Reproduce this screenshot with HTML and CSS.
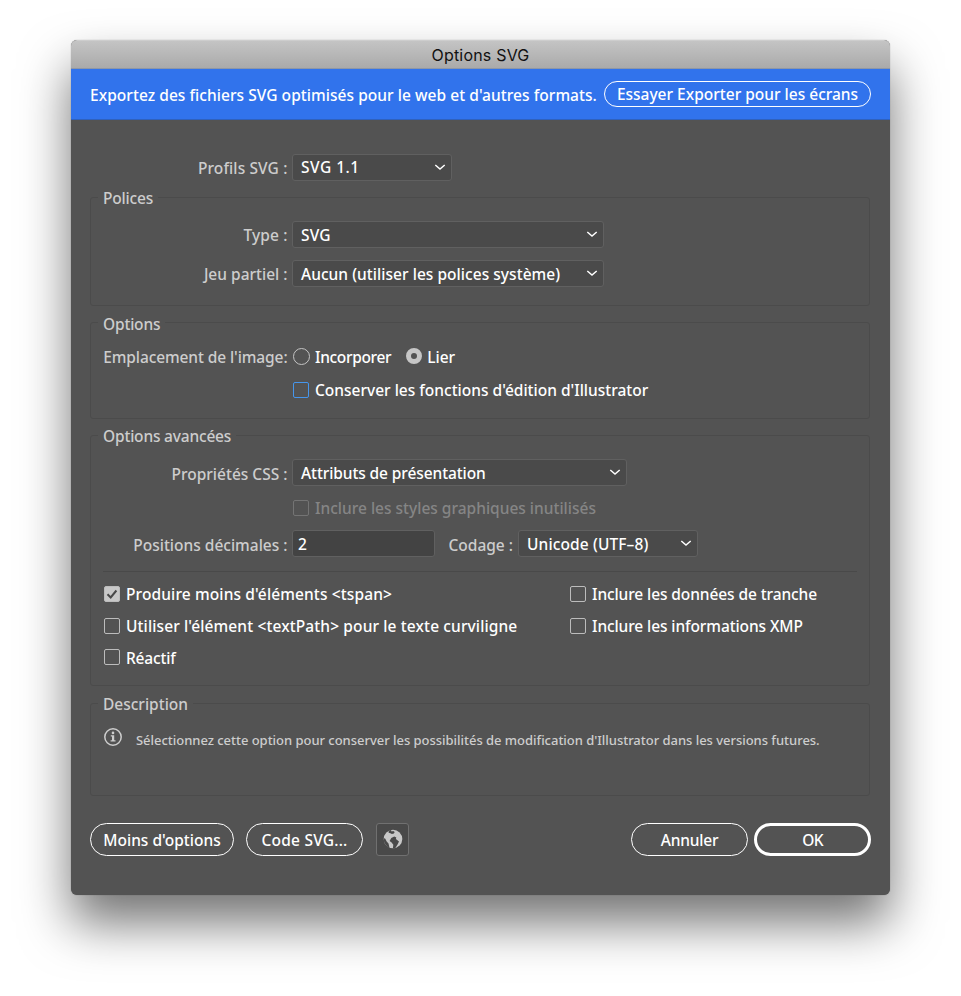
FILE: index.html
```
<!DOCTYPE html>
<html lang="fr">
<head>
<meta charset="utf-8">
<title>Options SVG</title>
<link rel="stylesheet" href="styles.css">
</head>
<body>
<svg class="defs" aria-hidden="true">
  <symbol id="chevron" viewBox="0 0 12 8"><path d="M1.300 2 6 6l4.700-4" fill="none" stroke="currentColor" stroke-width="1.500"/></symbol>
</svg>
<main class="window">
  <header class="titlebar">Options SVG</header>
  <div class="banner">
    <span class="banner-text">Exportez des fichiers SVG optimisés pour le web et d'autres formats.</span>
    <button class="pill pill-banner">Essayer Exporter pour les écrans</button>
  </div>
  <div class="content">
    <div class="row row-profile">
      <span class="label wide-1">Profils SVG :</span>
      <div class="select w-159"><span class="wide-3">SVG 1.1</span><svg class="chevron"><use href="#chevron"/></svg></div>
    </div>

    <section class="group group-fonts">
      <h2 class="legend tight-2">Polices</h2>
      <div class="row row-first">
        <span class="label wide-1">Type :</span>
        <div class="select low w-312"><span class="wide-1">SVG</span><svg class="chevron"><use href="#chevron"/></svg></div>
      </div>
      <div class="row row-next">
        <span class="label">Jeu partiel :</span>
        <div class="select low w-312"><span class="wide-0">Aucun (utiliser les polices système)</span><svg class="chevron"><use href="#chevron"/></svg></div>
      </div>
    </section>

    <section class="group group-options">
      <h2 class="legend legend-low tight-2">Options</h2>
      <div class="row row-first">
        <span class="label tight-1">Emplacement de l'image:</span>
        <div class="radios">
          <span class="choice"><i class="radio"></i><span class="tight-3">Incorporer</span></span>
          <span class="choice"><i class="radio radio-on"></i><span>Lier</span></span>
        </div>
      </div>
      <div class="choice choice-focus"><i class="box box-focus"></i><span>Conserver les fonctions d'édition d'Illustrator</span></div>
    </section>

    <section class="group group-advanced">
      <h2 class="legend tight-2">Options avancées</h2>
      <div class="row row-first">
        <span class="label label-low">Propriétés CSS :</span>
        <div class="select low w-335"><span class="tight-1">Attributs de présentation</span><svg class="chevron"><use href="#chevron"/></svg></div>
      </div>
      <div class="choice choice-disabled"><i class="box box-disabled"></i><span>Inclure les styles graphiques inutilisés</span></div>
      <div class="row row-next">
        <span class="label label-low">Positions décimales :</span>
        <div class="input low">2</div>
        <span class="label label-low label-encoding">Codage :</span>
        <div class="select low w-180"><span class="wide-1">Unicode (UTF–8)</span><svg class="chevron"><use href="#chevron"/></svg></div>
      </div>
      <hr class="divider">
      <div class="checks">
        <div class="choice"><i class="box box-on"><svg viewBox="0 0 16 16"><path d="M3.500 8.300 6.700 11.500 12.400 4.500" fill="none" stroke="#484848" stroke-width="2"/></svg></i><span class="wide-1">Produire moins d'éléments &lt;tspan&gt;</span></div>
        <div class="choice"><i class="box"></i><span class="tight-1">Inclure les données de tranche</span></div>
        <div class="choice"><i class="box"></i><span class="wide-1">Utiliser l'élément &lt;textPath&gt; pour le texte curviligne</span></div>
        <div class="choice"><i class="box"></i><span class="tight-1">Inclure les informations XMP</span></div>
        <div class="choice choice-last"><i class="box"></i><span class="tight-2">Réactif</span></div>
      </div>
    </section>

    <section class="group group-description">
      <h2 class="legend">Description</h2>
      <div class="hint">
        <svg class="info" viewBox="0 0 18 18"><circle cx="9" cy="9" r="8.200" fill="none" stroke="currentColor" stroke-width="1.500"/><circle cx="9" cy="4.900" r="1.300" fill="currentColor"/><path d="M6.800 7.300H10.200V12.300H11.500V13.600H6.600V12.300H8V8.500H6.800Z" fill="currentColor"/></svg>
        <span class="hint-text">Sélectionnez cette option pour conserver les possibilités de modification d'Illustrator dans les versions futures.</span>
      </div>
    </section>

    <footer class="actions">
      <button class="pill w-143">Moins d'options</button>
      <button class="pill w-117 wide-2">Code SVG...</button>
      <button class="globe" aria-label="Aperçu"><svg viewBox="0 0 20 20"><circle cx="10" cy="10" r="9.300" fill="#c8c8c8"/><path d="M5.800 1.700 7.800 1.100 8.700 2.600 10.200 2 11.700 3.100 10.900 4.600 8.900 5 7.400 4.200 5.600 3.700ZM8.300 9 11.300 7.600 13.300 8.600 12.900 10.100 16 12.600 14.700 15.200 12.400 18.900 9.900 19.500 10.300 15.800 8.600 13.600 6.600 12.100ZM.7 9 2.300 9.700 3.700 12.500 5.500 14.500 6.500 18.700 3.700 16.900 1.200 13.500Z" fill="#494949"/></svg></button>
      <button class="pill w-117 cancel tight-2">Annuler</button>
      <button class="pill w-117 ok">OK</button>
    </footer>
  </div>
</main>
</body>
</html>
```
FILE: styles.css
```
* { box-sizing: border-box; }
body {
  margin: 0;
  height: 996px;
  padding: 40px 71px 0;
  overflow: hidden;
  background: #fff;
  color: #fff;
  font: 500 15.5px/20px "Noto Sans", "Open Sans", sans-serif;
}
.defs { display: none; }
.window {
  width: 819px;
  height: 855px;
  border-radius: 6px;
  background: #535353;
  box-shadow: 0 0 1px rgba(0, 0, 0, .45), 0 28px 50px rgba(0, 0, 0, .55);
}
.titlebar {
  height: 29px;
  border-radius: 6px 6px 0 0;
  border-top: 1px solid #cdcdcd;
  border-bottom: 1px solid #8e97a6;
  background: linear-gradient(#c4c4c4, #aaa);
  color: #111;
  font: 400 16px/28px Inter, Roboto, sans-serif;
  letter-spacing: .2px;
  text-align: center;
}
.banner {
  display: flex;
  align-items: flex-start;
  justify-content: space-between;
  height: 51px;
  padding: 12px 19px 0 19px;
  border-bottom: 1px solid #2f61bd;
  background: #3173ec;
}
.banner-text { padding-top: 4px; letter-spacing: .05px; white-space: nowrap; }
.content { padding: 34px 19px 0 19px; }

.row { display: flex; align-items: center; }
.row-profile { padding-left: 1px; }
.row-first { margin-top: 13px; }
.row-next { margin-top: 12px; }
.label {
  width: 196.500px;
  margin-right: 4.500px;
  padding-top: 1px;
  color: #cdcdcd;
  text-align: right;
  white-space: nowrap;
}
.label-low { padding-top: 2px; }
.label-encoding { width: 78px; margin-right: 5px; }
.select, .input {
  display: flex;
  align-items: center;
  justify-content: space-between;
  height: 27px;
  padding: 0 5px 1px 8px;
  border: 1px solid #606060;
  border-radius: 3px;
  background: #4a4a4a;
  white-space: nowrap;
}
.input { width: 143px; padding: 0 5px; background: #434343; }
.low { padding-bottom: 0; }
.low > span { padding-top: 1px; }
.input.low { padding-top: 1px; }
.chevron { width: 12px; height: 8px; }
.low .chevron { margin-bottom: 1px; }

.group { margin-right: 1px; border: 1px solid #4b4b4b; border-radius: 3px; }
.group-fonts { height: 109px; margin-top: 16px; }
.group-options { height: 97px; margin-top: 16px; }
.group-advanced { height: 251px; margin-top: 16px; }
.group-description { height: 93px; margin-top: 17px; }
.legend {
  width: fit-content;
  margin: -10px 0 0 7px;
  padding: 0 5px;
  background: #535353;
  color: #cdcdcd;
  font-size: inherit;
  font-weight: 500;
}
.legend-low { margin: -9px 0 -1px 7px; }

.choice { display: flex; align-items: center; gap: 6px; height: 20px; white-space: nowrap; }
.choice > span { padding-top: 1px; }
.checks .choice > span, .choice-disabled > span { padding-top: 0; }
.checks .choice-last > span { padding-top: 1px; }
.radios { display: flex; gap: 15px; margin-top: -1px; padding-left: 1px; }
.radios .choice { gap: 5px; }
.choice-focus { margin: 12.500px 0 0 202px; }
.choice-disabled { margin: 12px 0 0 202px; color: #858585; }
.box {
  flex: none;
  width: 16px;
  height: 16px;
  border: 1px solid #bcbcbc;
  border-radius: 2px;
}
.box svg { display: block; width: 16px; height: 16px; margin: -1px; }
.box-focus { border-color: #4696ec; }
.box-disabled { border-color: #747474; }
.box-on { background: #c8c8c8; }
.radio {
  width: 17px;
  height: 17px;
  border: 1px solid #c4c4c4;
  border-radius: 50%;
}
.radio-on { width: 16px; height: 16px; border: 5px solid #c6c6c6; }
.divider { height: 1px; margin: 14px 12px 0 12px; border: 0; background: #494949; }
.checks {
  display: grid;
  grid-template-columns: 466px 1fr;
  row-gap: 11.600px;
  padding: 12px 0 0 13px;
}
.hint { display: flex; gap: 14px; margin: 14px 0 0 13px; color: #cdcdcd; }
.info { width: 18px; height: 18px; }
.hint-text { padding-top: 2px; font-size: 13px; letter-spacing: -.03px; white-space: nowrap; }

.actions { display: flex; margin-top: 27px; }
.pill {
  height: 33px;
  padding: 0;
  border: 1px solid #fff;
  border-radius: 17px;
  background: transparent;
  color: #fff;
  font: inherit;
  white-space: nowrap;
}
.pill-banner { width: 267px; height: 26px; padding-bottom: 1px; line-height: 20px; }
.actions .pill { margin-right: 12px; padding-top: 1px; }
.actions .cancel { margin: 0 6px 0 auto; }
.actions .ok { margin: 0; border: 3px solid #fff; letter-spacing: -.8px; }
.globe {
  display: grid;
  place-items: center;
  width: 33px;
  height: 33px;
  margin-left: 1px;
  padding: 0 0 2px;
  border: 1px solid #707070;
  border-radius: 3px;
  background: #494949;
}
.globe svg { width: 20px; height: 20px; }

.w-117 { width: 117px; }
.w-143 { width: 144px; }
.w-159 { width: 160px; }
.w-180 { width: 180px; }
.w-312 { width: 312px; }
.w-335 { width: 335px; }

.wide-0 { letter-spacing: .04px; }
.wide-1 { letter-spacing: .12px; }
.wide-2 { letter-spacing: .22px; }
.wide-3 { letter-spacing: .5px; }
.tight-1 { letter-spacing: -.1px; }
.tight-2 { letter-spacing: -.19px; }
.tight-3 { letter-spacing: -.34px; }
```
